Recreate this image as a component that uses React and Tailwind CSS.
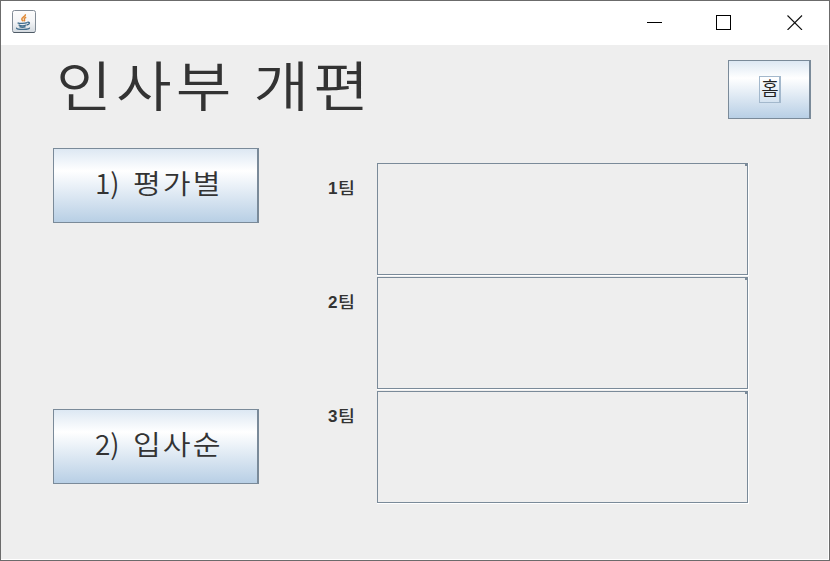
const GULIM = "font-['Noto_Sans_CJK_KR','Noto_Sans',sans-serif]";

function JavaIcon() {
  return (
    <svg width="24" height="24" viewBox="0 0 24 24" fill="none">
      <defs>
        <linearGradient id="tile" x1="0" y1="0" x2="0" y2="1">
          <stop offset="0" stopColor="#fdfdfd" />
          <stop offset="0.5" stopColor="#f4f5f7" />
          <stop offset="1" stopColor="#d3d9df" />
        </linearGradient>
      </defs>
      <rect x="0.5" y="0.5" width="23" height="22" rx="2" fill="url(#tile)" stroke="#818b95" />
      <path d="M1.5 22.5H22.5" stroke="#4f5b66" />
      <path d="M13.4 4.2C14.2 6.4 9.2 7.2 9.8 9.2C10 10 10.8 10.6 11.1 11.3M14.2 7.2C12.4 8 11.8 8.8 12.5 9.6C13 10.3 12.3 10.9 11.9 11.3" stroke="#e08a35" strokeWidth="1.5" />
      <path d="M5.6 12.8C7.5 13.6 13 13.6 15 12.6M15.2 12.4C18.2 11.6 18.4 14.2 14.6 15M6.6 14.9C8.5 15.8 12.4 15.8 14.2 15M7.4 16.7C9 17.4 12 17.4 13.6 16.7M4.9 17.7C3.4 18.8 7.8 19.6 11.6 19.4C15.5 19.3 18 18.6 17.4 17.6" stroke="#416d8c" strokeWidth="1.3" />
    </svg>
  );
}

function TitleBar() {
  return (
    <header className="flex h-11 shrink-0 items-start justify-between bg-white pl-[11px] pt-[9px]">
      <JavaIcon />
      <div className="flex gap-[54px] pr-[26px] pt-[4px]">
        <svg className="w-4" height="16" viewBox="0 0 16 16" shapeRendering="crispEdges">
          <path d="M0 8.5H15" stroke="#000" />
        </svg>
        <svg className="-ml-px w-4" height="16" viewBox="0 0 16 16" shapeRendering="crispEdges" fill="none">
          <rect x="0.5" y="1.5" width="14" height="14" stroke="#000" />
        </svg>
        <svg className="ml-px w-4" height="16" viewBox="0 0 16 16" fill="none">
          <path d="M0.5 1.5L15 16M15 1.5L0.5 16" stroke="#111" strokeWidth="1.1" />
        </svg>
      </div>
    </header>
  );
}

function MetalButton({ className, children }) {
  return (
    <button
      className={`flex border border-r-2 border-[#7a8a99] bg-linear-to-b from-[#dde8f3] via-white via-30% to-[#b8cfe5] text-[#333] ${className}`}
    >
      {children}
    </button>
  );
}

function MenuButton({ number, label }) {
  return (
    <MetalButton className={`${GULIM} h-[75px] w-[206px] items-baseline pt-[13px] pl-[41px] font-[350]`}>
      <span className="w-[38px] text-left text-[28px] leading-[40px]">{number}</span>
      <span className="origin-left scale-x-[1.12] text-[27px] leading-[40px] tracking-[1.8px]">{label}</span>
    </MetalButton>
  );
}

function TeamRow({ label }) {
  return (
    <div className="flex h-[114px]">
      <div className="flex w-[49px] items-baseline pt-[13px] text-[#333]">
        <span className="font-['Liberation_Sans',Arial,sans-serif] text-[17px] leading-[22px] font-bold">{label}</span>
        <span className="ml-px origin-left scale-x-115 font-['Noto_Sans_CJK_KR',sans-serif] text-[16px] leading-[22px] font-medium">팀</span>
      </div>
      <div className="h-[113px] w-[372px] border-r border-b border-white">
        <div className="flex h-full items-start justify-end border border-[#7a8a99]">
          <div className="h-[2px] w-[2px] bg-[#7a8a99]" />
        </div>
      </div>
    </div>
  );
}

export default function App() {
  return (
    <div className="flex h-[561px] w-[830px] flex-col overflow-hidden border border-[#6b6b6b] bg-[#eee]">
      <TitleBar />
      <main className="flex grow flex-col border-r border-b border-white">
        <div className="flex h-[103px] items-start justify-between pl-[55px] pr-[17px]">
          <h1 className={`${GULIM} origin-left scale-x-[1.12] text-[54px] leading-[77px] font-[350] tracking-[3.8px] whitespace-pre text-[#333]`}>인사부 개편</h1>
          <MetalButton className="mt-[15px] h-[59px] w-[83px] items-center justify-center">
            <span className={`${GULIM} ml-px flex h-[27px] w-[22px] justify-center border border-r-2 border-[#a3b8cc] pl-[2px] text-[19px] leading-[22px] font-[350] text-[#222]`}>홈</span>
          </MetalButton>
        </div>
        <div className="flex pl-[52px]">
          <nav className="flex h-[336px] w-[275px] flex-col justify-between">
            <MenuButton number="1)" label="평가별" />
            <MenuButton number="2)" label="입사순" />
          </nav>
          <section className="pt-[15px]">
            <TeamRow label="1" />
            <TeamRow label="2" />
            <TeamRow label="3" />
          </section>
        </div>
      </main>
    </div>
  );
}
